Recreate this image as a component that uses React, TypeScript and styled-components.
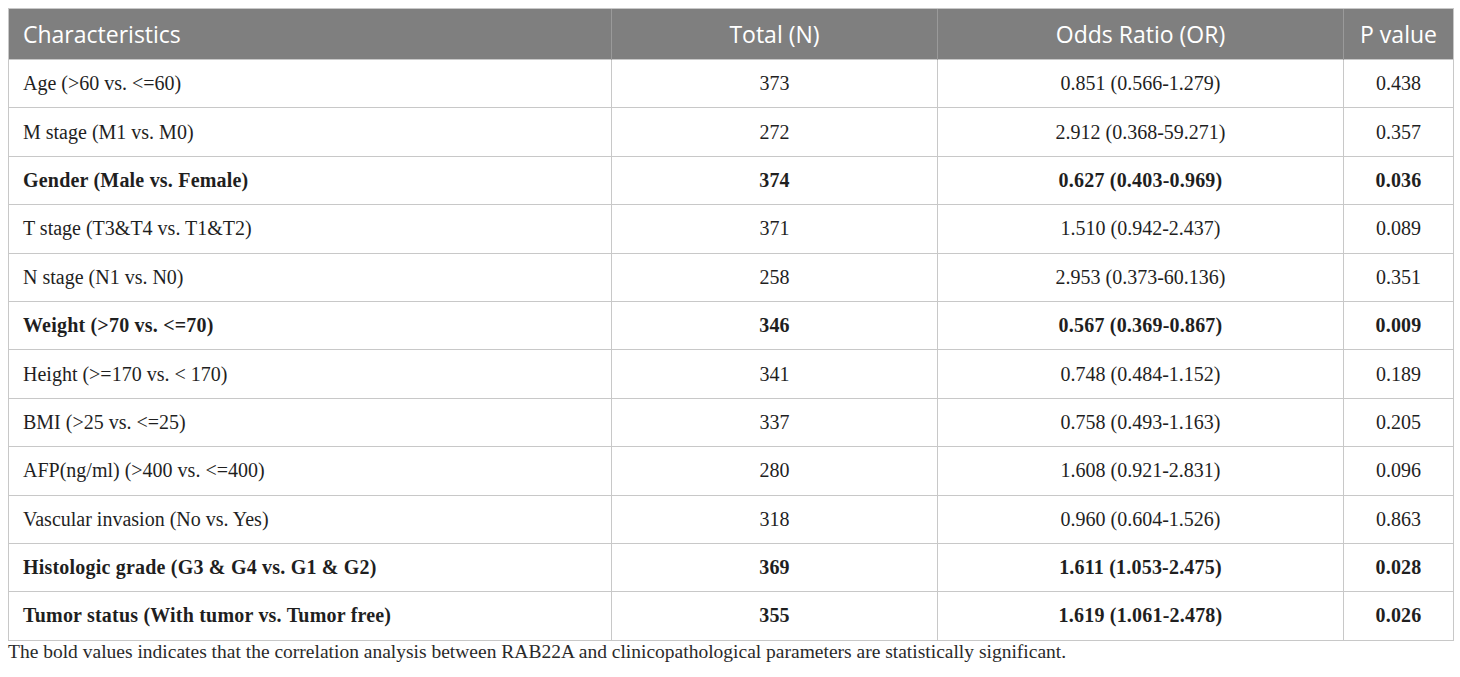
import React from "react";
import styled, { createGlobalStyle } from "styled-components";

const Global = createGlobalStyle`
  html, body { margin: 0; padding: 0; background: #ffffff; }
  body { padding: 8px 0 0 8px; }
`;

const Wrap = styled.div`
  width: 1445px;
  display: flex;
  flex-direction: column;
`;

const Table = styled.table`
  width: 1445px;
  border-collapse: collapse;
  table-layout: fixed;
  border: 1px solid #c8c8c8;
`;

const HeadCell = styled.th<{ $align?: "left" | "center" }>`
  height: 50px;
  padding: 0 14px;
  background: #7f7f7f;
  color: #ffffff;
  font-family: "Open Sans", "Noto Sans", sans-serif;
  font-weight: 400;
  font-size: 23px;
  text-align: ${(p) => p.$align ?? "center"};
  border-left: 1px solid #9a9a9a;
  border-top: 1px solid #c8c8c8;
  &:first-child { border-left: none; }
`;

const Cell = styled.td<{ $align?: "left" | "center"; $bold?: boolean }>`
  height: 47.4px;
  padding: 0 14px;
  font-family: "Liberation Serif", "Times New Roman", serif;
  font-size: 20px;
  color: #1f1f1f;
  font-weight: ${(p) => (p.$bold ? 700 : 400)};
  letter-spacing: ${(p) => (p.$bold ? "0.2px" : "0")};
  text-align: ${(p) => p.$align ?? "center"};
  border: 1px solid #c8c8c8;
`;

const Caption = styled.p`
  margin: 0;
  line-height: 22px;
  font-family: "Liberation Serif", "Times New Roman", serif;
  font-size: 19.5px;
  color: #2a2a2a;
`;

type Row = { c: string; n: string; or: string; p: string; bold?: boolean };

const rows: Row[] = [
  { c: "Age (>60 vs. <=60)", n: "373", or: "0.851 (0.566-1.279)", p: "0.438" },
  { c: "M stage (M1 vs. M0)", n: "272", or: "2.912 (0.368-59.271)", p: "0.357" },
  { c: "Gender (Male vs. Female)", n: "374", or: "0.627 (0.403-0.969)", p: "0.036", bold: true },
  { c: "T stage (T3&T4 vs. T1&T2)", n: "371", or: "1.510 (0.942-2.437)", p: "0.089" },
  { c: "N stage (N1 vs. N0)", n: "258", or: "2.953 (0.373-60.136)", p: "0.351" },
  { c: "Weight (>70 vs. <=70)", n: "346", or: "0.567 (0.369-0.867)", p: "0.009", bold: true },
  { c: "Height (>=170 vs. < 170)", n: "341", or: "0.748 (0.484-1.152)", p: "0.189" },
  { c: "BMI (>25 vs. <=25)", n: "337", or: "0.758 (0.493-1.163)", p: "0.205" },
  { c: "AFP(ng/ml) (>400 vs. <=400)", n: "280", or: "1.608 (0.921-2.831)", p: "0.096" },
  { c: "Vascular invasion (No vs. Yes)", n: "318", or: "0.960 (0.604-1.526)", p: "0.863" },
  { c: "Histologic grade (G3 & G4 vs. G1 & G2)", n: "369", or: "1.611 (1.053-2.475)", p: "0.028", bold: true },
  { c: "Tumor status (With tumor vs. Tumor free)", n: "355", or: "1.619 (1.061-2.478)", p: "0.026", bold: true },
];

export default function App() {
  return (
    <>
      <Global />
      <Wrap>
        <Table>
          <colgroup>
            <col style={{ width: 603 }} />
            <col style={{ width: 326 }} />
            <col style={{ width: 406 }} />
            <col style={{ width: 110 }} />
          </colgroup>
          <thead>
            <tr>
              <HeadCell $align="left">Characteristics</HeadCell>
              <HeadCell>Total (N)</HeadCell>
              <HeadCell>Odds Ratio (OR)</HeadCell>
              <HeadCell>P value</HeadCell>
            </tr>
          </thead>
          <tbody>
            {rows.map((r) => (
              <tr key={r.c}>
                <Cell $align="left" $bold={r.bold}>{r.c}</Cell>
                <Cell $bold={r.bold}>{r.n}</Cell>
                <Cell $bold={r.bold}>{r.or}</Cell>
                <Cell $bold={r.bold}>{r.p}</Cell>
              </tr>
            ))}
          </tbody>
        </Table>
        <Caption>
          The bold values indicates that the correlation analysis between RAB22A and clinicopathological parameters are statistically significant.
        </Caption>
      </Wrap>
    </>
  );
}
